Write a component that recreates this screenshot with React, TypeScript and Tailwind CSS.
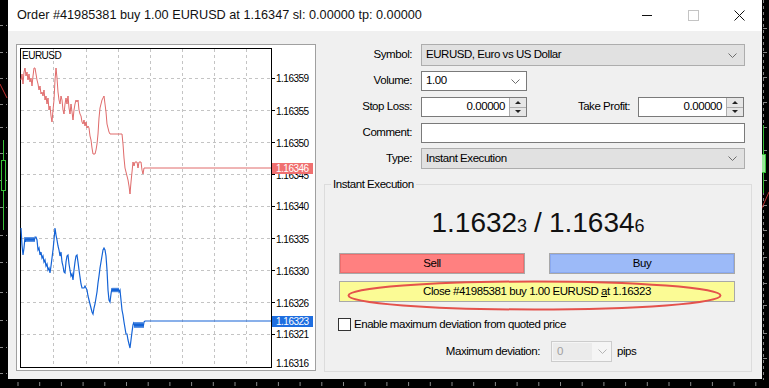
import React from 'react';

const redSeries =
  '21,80 22,74 23,84 24,72 25,68 26,76 27,72 28,80 29,74 30,82 31,78 32,86 33,76 34,68 35,68 36,74 37,80 38,84 39,90 40,86 41,94 42,92 43,96 44,90 45,100 46,96 47,104 48,98 49,110 50,106 51,116 52,122 53,110 54,100 55,80 56,68 57,78 58,92 59,100 60,104 61,96 62,100 63,110 64,114 65,104 66,98 67,104 68,96 69,108 70,114 71,104 72,112 73,120 74,110 75,104 76,100 77,102 78,100 79,110 80,114 81,116 82,122 83,124 84,120 85,126 86,122 87,128 88,126 89,128 90,136 91,140 92,148 93,154 95,154 96,150 97,144 98,134 99,118 100,108 101,104 102,100 103,98 104,96 105,104 106,112 107,124 108,128 109,132 110,134 122,134 123,144 124,158 125,168 126,172 127,176 128,180 129,186 130,194 131,182 132,172 133,162 134,166 135,162 137,162 138,168 139,162 141,162 142,170 143,174 144,168 145,168 271,168';

const blueSeries =
  '21,228 22,245 23,255 24,248 25,237 26,242 27,237 28,242 29,237 30,242 31,237 32,242 33,237 34,242 35,237 36,237 37,240 38,250 39,248 40,255 41,252 42,258 43,256 44,262 45,260 46,266 47,264 48,270 49,268 50,273 51,266 52,258 53,250 54,240 55,228 56,235 57,240 58,246 59,250 60,256 61,252 62,262 63,266 64,272 65,273 66,262 67,256 68,255 69,264 70,270 71,276 72,274 73,280 74,270 75,262 76,256 77,255 78,262 79,270 80,277 81,284 82,288 84,288 85,286 86,288 87,290 88,296 89,300 90,304 91,308 92,312 93,314 94,308 95,304 96,298 97,292 98,283 99,276 100,268 101,262 102,256 103,250 104,248 105,250 106,256 107,270 108,290 109,300 110,302 111,294 112,288 113,292 114,288 115,292 116,288 117,292 118,288 119,292 120,290 121,300 122,310 123,315 124,322 125,328 126,334 127,334 128,340 129,344 130,348 131,340 132,332 133,325 134,322 135,328 136,322 137,328 138,322 139,328 140,322 141,328 142,322 143,328 144,322 145,321 271,321';

const gridY = [78, 110, 142, 174, 206, 238, 270, 302, 334];
const gridX = [53, 86, 118, 150, 182, 214, 246];

const axisLabels = [
  { y: 78, text: '1.16359' },
  { y: 111, text: '1.16355' },
  { y: 143, text: '1.16350' },
  { y: 175, text: '1.16345' },
  { y: 206, text: '1.16340' },
  { y: 239, text: '1.16335' },
  { y: 271, text: '1.16330' },
  { y: 303, text: '1.16326' },
  { y: 334, text: '1.16321' },
  { y: 363, text: '1.16316' },
];

const chartFont = 'Liberation Sans, Arial, sans-serif';

function Backdrop() {
  const leftTicks = [25, 52, 78, 104, 127, 153, 180, 207, 235, 262, 292, 320, 347, 373];
  const rightTicks = [28, 52, 77, 102, 127, 150, 180, 205, 230, 257, 283, 305, 333, 358];
  const bottomTicks = Array.from({ length: 36 }, (_, i) => 18 + i * 21.7);
  return (
    <svg className="absolute inset-0" width="769" height="388" viewBox="0 0 769 388">
      <rect width="769" height="388" fill="#000" />
      {leftTicks.map(y => (
        <line key={y} x1="0" x2="7" y1={y + 0.5} y2={y + 0.5} stroke="#8a8a8a" strokeDasharray="3 3" />
      ))}
      <line x1="0" y1="84" x2="7" y2="98" stroke="#c03030" />
      <line x1="3.5" y1="140" x2="3.5" y2="230" stroke="#38c038" />
      <rect x="1.5" y="160.5" width="4" height="30" fill="#000" stroke="#38c038" />
      <line x1="763.5" y1="0" x2="763.5" y2="380" stroke="#8a8a8a" strokeDasharray="3 3" />
      {rightTicks.map(y => (
        <line key={y} x1="763" x2="767" y1={y + 0.5} y2={y + 0.5} stroke="#8a8a8a" />
      ))}
      <line x1="763.5" y1="125" x2="763.5" y2="193" stroke="#38c038" />
      <rect x="761.5" y="154.5" width="4" height="18" fill="#98e898" stroke="#38c038" />
      <line x1="761" y1="210" x2="769" y2="192" stroke="#c03030" />
      {bottomTicks.map(x => (
        <line key={x} x1={x} x2={x} y1="382" y2="386" stroke="#8a8a8a" />
      ))}
    </svg>
  );
}

function ChartPanel() {
  return (
    <div className="w-[300px] h-[327px] border border-[#a0a0a0] bg-white shrink-0">
      <svg width="298" height="325" viewBox="17 45 298 325">
        <rect x="17" y="45" width="298" height="325" fill="#fff" />
        {gridY.map(y => (
          <line key={y} x1="21" x2="271" y1={y + 0.5} y2={y + 0.5} stroke="#c4c4c4" strokeDasharray="3 3" />
        ))}
        {gridX.map(x => (
          <line key={x} x1={x + 0.5} x2={x + 0.5} y1="49" y2="367" stroke="#c4c4c4" strokeDasharray="3 3" />
        ))}
        {gridY.map(y => (
          <line key={'t' + y} x1="271" x2="275" y1={y + 0.5} y2={y + 0.5} stroke="#000" />
        ))}
        <rect x="20.5" y="48.5" width="251" height="319" fill="none" stroke="#000" />
        <text x="22" y="59" fontSize="10" letterSpacing="-0.5" fontFamily={chartFont} fill="#000">EURUSD</text>
        {axisLabels.map(l => (
          <text key={l.text} x="276" y={l.y + 4} fontSize="10" letterSpacing="-0.5" fontFamily={chartFont} fill="#000">
            {l.text}
          </text>
        ))}
        <polyline points={redSeries} fill="none" stroke="#e06a6a" strokeWidth="1" />
        <polyline points={blueSeries} fill="none" stroke="#1463d6" strokeWidth="1.2" />
        <rect x="272" y="163" width="41" height="11" fill="#f07070" />
        <text x="276" y="172" fontSize="10" letterSpacing="-0.5" fontFamily={chartFont} fill="#fff">1.16346</text>
        <rect x="272" y="316" width="41" height="11" fill="#1e6ee0" />
        <text x="276" y="325" fontSize="10" letterSpacing="-0.5" fontFamily={chartFont} fill="#fff">1.16323</text>
      </svg>
    </div>
  );
}

function Chevron({ color = '#6d6d6d' }: { color?: string }) {
  return (
    <svg width="9" height="5" viewBox="0 0 9 5">
      <path d="M0.5 0.5L4.5 4.5L8.5 0.5" fill="none" stroke={color} />
    </svg>
  );
}

function Spinner() {
  return (
    <div className="flex flex-col w-[17px] h-full border-l border-[#adadad] bg-[#e6e6e6]">
      <div className="flex-1 flex items-center justify-center border-b border-[#adadad]">
        <svg width="6" height="3" viewBox="0 0 6 3"><path d="M0 3L3 0L6 3Z" fill="#222" /></svg>
      </div>
      <div className="flex-1 flex items-center justify-center">
        <svg width="6" height="3" viewBox="0 0 6 3"><path d="M0 0L3 3L6 0Z" fill="#222" /></svg>
      </div>
    </div>
  );
}

function SpinInput({ value }: { value: string }) {
  return (
    <div className="flex w-[106px] h-[20px] border border-[#7a7a7a] bg-white">
      <div className="flex-1 flex items-center justify-end pr-[4px]">{value}</div>
      <Spinner />
    </div>
  );
}

export default function App() {
  return (
    <div className="relative w-[769px] h-[388px] bg-black overflow-hidden">
      <Backdrop />
      <div className="relative ml-[8px] w-[754px] h-[379px] bg-[#f0f0f0] flex flex-col text-[11.5px] tracking-[-0.45px] text-black font-['Liberation_Sans',Arial,sans-serif]">
        {/* title bar */}
        <div className="h-[31px] bg-white flex items-center shrink-0">
          <div className="pl-[9px] flex-1 text-[12.7px] tracking-normal text-[#111]">
            Order #41985381 buy 1.00 EURUSD at 1.16347 sl: 0.00000 tp: 0.00000
          </div>
          <div className="w-[46px] h-full flex items-center justify-center">
            <svg width="10" height="1" viewBox="0 0 10 1"><rect width="10" height="1" fill="#111" /></svg>
          </div>
          <div className="w-[46px] h-full flex items-center justify-center">
            <svg width="11" height="11" viewBox="0 0 11 11"><rect x="0.5" y="0.5" width="10" height="10" fill="none" stroke="#c4c4c4" /></svg>
          </div>
          <div className="w-[46px] h-full flex items-center justify-center">
            <svg width="11" height="11" viewBox="0 0 11 11"><path d="M0.5 0.5L10.5 10.5M10.5 0.5L0.5 10.5" stroke="#111" strokeWidth="1" /></svg>
          </div>
        </div>

        {/* body */}
        <div className="flex pl-[8px] pt-[13px]">
          <ChartPanel />

          <div className="ml-[8px] w-[428px] flex flex-col">
            <div className="flex items-center h-[22px]">
              <div className="w-[88px] text-right">Symbol:</div>
              <div className="ml-[9px] w-[324px] h-full flex items-center justify-between border border-[#adadad] bg-[#e1e1e1] pl-[4px] pr-[7px]">
                <span>EURUSD, Euro vs US Dollar</span>
                <Chevron />
              </div>
            </div>

            <div className="flex items-center h-[20px] mt-[5px]">
              <div className="w-[88px] text-right">Volume:</div>
              <div className="ml-[9px] w-[106px] h-full flex items-center justify-between border border-[#7a7a7a] bg-white pl-[4px] pr-[6px]">
                <span>1.00</span>
                <Chevron />
              </div>
            </div>

            <div className="flex items-center h-[20px] mt-[6px]">
              <div className="w-[88px] text-right">Stop Loss:</div>
              <div className="ml-[9px]">
                <SpinInput value="0.00000" />
              </div>
              <div className="flex-1 text-right">Take Profit:</div>
              <div className="ml-[8px] mr-[8px]">
                <SpinInput value="0.00000" />
              </div>
            </div>

            <div className="flex items-center h-[20px] mt-[6px]">
              <div className="w-[88px] text-right">Comment:</div>
              <div className="ml-[9px] w-[324px] h-full border border-[#7a7a7a] bg-white" />
            </div>

            <div className="flex items-center h-[21px] mt-[5px]">
              <div className="w-[88px] text-right">Type:</div>
              <div className="ml-[9px] w-[324px] h-full flex items-center justify-between border border-[#adadad] bg-[#e1e1e1] pl-[4px] pr-[7px]">
                <span>Instant Execution</span>
                <Chevron />
              </div>
            </div>

            <fieldset className="mt-[8px] h-[195px] border border-[#dcdcdc] p-0 m-0">
              <legend className="ml-[6px] px-[2px] leading-[14px]">Instant Execution</legend>
              <div className="flex flex-col pl-[14px]">
                <div className="mt-[16px] h-[32px] flex items-baseline justify-center pr-[14px] tracking-normal text-[#111] leading-[32px]">
                  <span className="text-[28px]">1.1632</span>
                  <span className="text-[18px]">3</span>
                  <span className="text-[28px] mx-[7px]">/</span>
                  <span className="text-[28px]">1.1634</span>
                  <span className="text-[18px]">6</span>
                </div>

                <div className="mt-[14px] flex gap-[24px]">
                  <div className="w-[186px] h-[21px] border border-[#a8a8a8] bg-[#ff8080] shadow-[inset_0_0_0_1px_#ee6e6e] flex items-center justify-center">
                    Sell
                  </div>
                  <div className="w-[186px] h-[21px] border border-[#a8a8a8] bg-[#9cbaf8] shadow-[inset_0_0_0_1px_#8aa9f0] flex items-center justify-center">
                    Buy
                  </div>
                </div>

                <div className="relative mt-[7px] w-[396px] h-[21px] border border-[#a8a8a8] bg-[#fbfb95] flex items-center justify-center">
                  <span>
                    Close #41985381 buy 1.00 EURUSD <span className="underline">a</span>t 1.16323
                  </span>
                  <svg className="absolute left-0 top-[-4px]" width="396" height="34" viewBox="0 0 396 34">
                    <ellipse cx="194.5" cy="17.5" rx="186" ry="14" fill="none" stroke="#e4524c" strokeWidth="2" />
                  </svg>
                </div>

                <div className="mt-[16px] h-[13px] flex items-center">
                  <div className="ml-[-1px] w-[13px] h-[13px] border border-[#333] bg-white" />
                  <span className="ml-[3px]">Enable maximum deviation from quoted price</span>
                </div>

                <div className="mt-[10px] h-[21px] flex items-center">
                  <div className="w-[201px] text-right">Maximum deviation:</div>
                  <div className="ml-[11px] w-[61px] h-full flex border border-[#cccccc] bg-[#f5f5f5]">
                    <div className="flex-1 flex items-center pl-[4px] bg-[#ebebeb] text-[#a0a0a0] m-[1px]">0</div>
                    <div className="w-[18px] flex items-center justify-center">
                      <Chevron color="#b5b5b5" />
                    </div>
                  </div>
                  <span className="ml-[5px]">pips</span>
                </div>
              </div>
            </fieldset>
          </div>
        </div>
      </div>
    </div>
  );
}
